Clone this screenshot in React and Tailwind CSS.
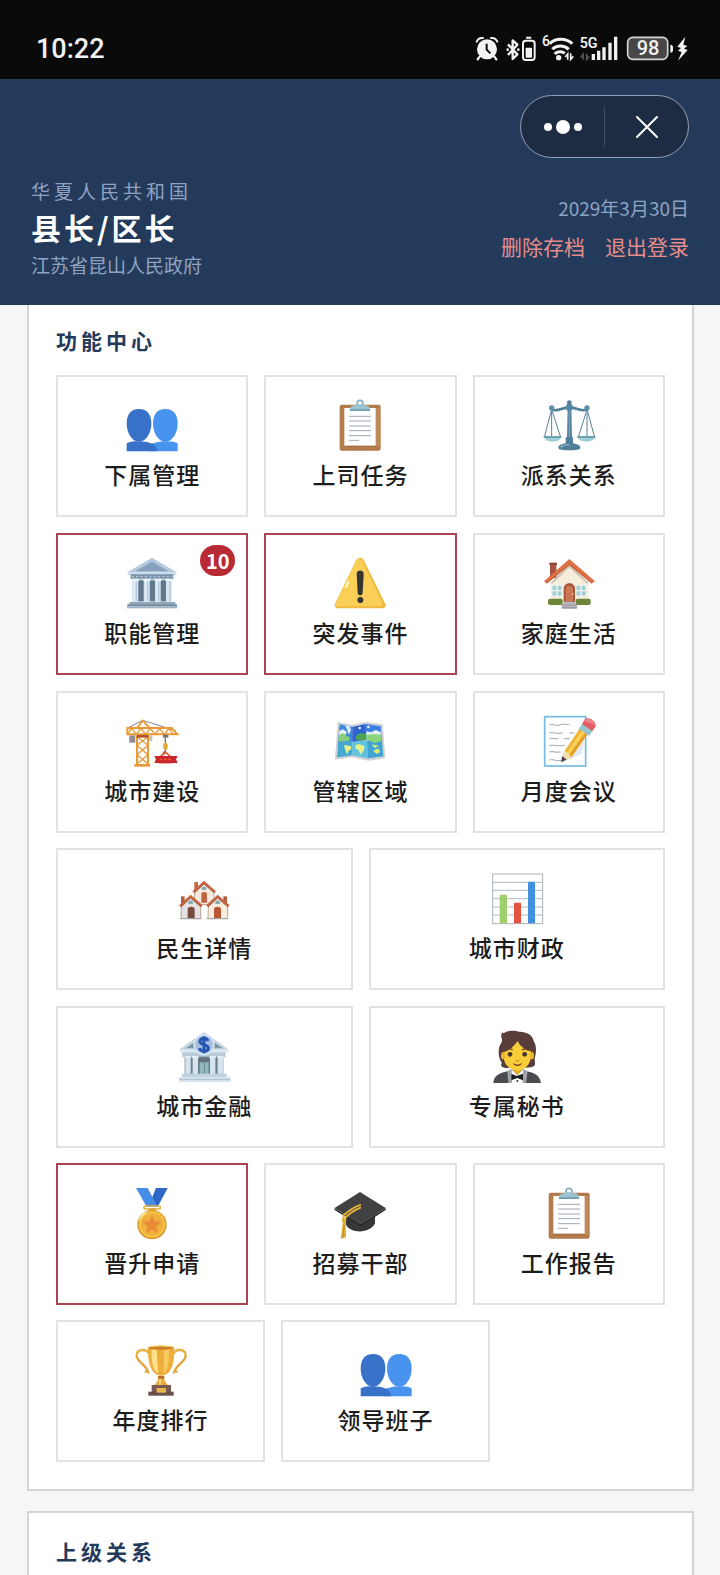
import React from 'react';
import { clsx } from 'clsx';

const Svg = ({ children }) => (
  <svg viewBox="0 0 162 162" className="h-[54px] w-[54px]" aria-hidden="true">
    {children}
  </svg>
);

const PeopleIcon = () => (
  <Svg>
    <path d="M121 33C96 33 84 50 84 77C84 103 99 131 121 131C143 131 158 103 158 77C158 50 146 33 121 33Z" fill="#4893ee" />
    <path d="M72 160V142C88 133 104 130 121 130C140 130 150 132 158 136V160Z" fill="#4893ee" />
    <path d="M42 33C17 33 5 50 5 77C5 103 20 131 42 131C64 131 79 103 79 77C79 50 67 33 42 33Z" fill="#3871c8" />
    <path d="M5 160V136C14 131 28 130 42 130C70 130 96 138 96 160Z" fill="#3871c8" />
  </Svg>
);

const ClipboardIcon = () => (
  <Svg>
    <rect x="20" y="20" width="123" height="138" rx="6" fill="#b27b4b" />
    <path d="M129 30h11v116h-11z" fill="#c08a58" />
    <rect x="34" y="30" width="94" height="114" fill="#fff" />
    <path d="M34 144h94" stroke="#8f5f38" strokeWidth="2" />
    <path d="M48 55h66M48 69h66M48 84h66M48 98h66M48 113h66M48 127h30" stroke="#9fa8b3" strokeWidth="3" />
    <circle cx="81" cy="16" r="9" fill="none" stroke="#82aebf" strokeWidth="5" />
    <path d="M51 39V30C54 23 62 22 70 20C76 18 86 18 92 20C100 22 108 23 111 30V39Z" fill="#9cc3d2" />
    <path d="M51 34h60v5H51z" fill="#6f9db0" />
  </Svg>
);

const ScaleIcon = () => (
  <Svg>
    <g fill="none" stroke="#5a8199" strokeWidth="3">
      <path d="M29 34L7 118M29 34L56 118M29 34V118" />
      <path d="M135 34L109 118M135 34L158 118M135 34V118" />
    </g>
    <path d="M29 34C48 44 58 28 82 28C106 28 116 44 135 34" fill="none" stroke="#4f8098" strokeWidth="8" />
    <path d="M5 115h53c-3 12-13 16-26 16S8 127 5 115z" fill="#9fd0d6" />
    <path d="M106 115h54c-3 12-13 16-27 16s-24-4-27-16z" fill="#9fd0d6" />
    <path d="M5 117h53M106 117h54" stroke="#5b8ea5" strokeWidth="5" />
    <circle cx="29" cy="30" r="8" fill="#5f90a9" />
    <circle cx="135" cy="30" r="8" fill="#5f90a9" />
    <path d="M77 30h11l2 92H75z" fill="#4f7f99" />
    <path d="M82 32v86" stroke="#7fadc2" strokeWidth="3" />
    <circle cx="82" cy="28" r="11" fill="#5587a1" />
    <circle cx="82" cy="14" r="7" fill="#4f7f99" />
    <path d="M71 118h22v18c12 2 22 6 22 13c0 6-15 8-33 8s-33-2-33-8c0-7 10-11 22-13z" fill="#4f7f99" />
    <path d="M56 148c6-6 16-8 26-8" fill="none" stroke="#8ab6c9" strokeWidth="4" />
  </Svg>
);

const TempleIcon = () => (
  <Svg>
    <path d="M81 5L154 48V56H8V48Z" fill="#b5c9dc" />
    <path d="M81 17L131 46H31Z" fill="#87a2bd" />
    <path d="M8 51H154" stroke="#d6e4f0" strokeWidth="5" />
    <rect x="17" y="55" width="128" height="14" fill="#718aa5" />
    <path d="M20 62H143" stroke="#a9bfd4" strokeWidth="5" strokeDasharray="8 5" />
    <rect x="22" y="68" width="118" height="72" fill="#c9d9e8" />
    <path d="M40 73h16v63H40zM74 73h16v63H74zM107 73h16v63h-16z" fill="#61788d" />
    <g fill="#dce9f4">
      <path d="M24 72h15v66H24zM58 72h15v66H58zM91 72h15v66H91zM124 72h15v66h-15z" />
    </g>
    <path d="M20 71h22M55 71h22M88 71h22M121 71h22" stroke="#eef5fb" strokeWidth="6" />
    <path d="M34 76v60M68 76v60M101 76v60M134 76v60" stroke="#b4c7da" strokeWidth="4" />
    <rect x="13" y="138" width="138" height="8" fill="#8fa6b9" />
    <rect x="7" y="145" width="149" height="6" fill="#6f879b" />
    <rect x="6" y="151" width="151" height="6" fill="#9db3c6" />
  </Svg>
);

const WarningIcon = () => (
  <Svg>
    <path d="M70 12C75 3 87 3 92 12L156 142C160 151 156 157 147 157H16C7 157 3 151 7 142Z" fill="#f0b840" />
    <path d="M68 16C73 5 84 5 89 16L147 138C151 147 148 151 141 151H18C9 151 5 148 9 140Z" fill="#f9cf57" />
    <path d="M39 92L46 78" stroke="#fff6c4" strokeWidth="7" strokeLinecap="round" />
    <path d="M71 54c0-14 21-14 21 0l-3 56c-1 11-14 11-15 0z" fill="#36342f" />
    <circle cx="82" cy="132" r="9" fill="#36342f" />
  </Svg>
);

const HouseIcon = () => (
  <Svg>
    <rect x="24" y="21" width="19" height="45" fill="#a85342" />
    <path d="M22 20h23v7H22z" fill="#8c4638" />
    <path d="M82 26L140 80V146H27V80Z" fill="#f7eddc" />
    <path d="M28 82L82 30L138 82" fill="none" stroke="#cfc3ae" strokeWidth="6" />
    <path d="M82 9L159 76L150 82L82 26L14 82L6 76Z" fill="#e07044" />
    <path d="M14 82L82 26L150 82" fill="none" stroke="#b9502f" strokeWidth="3" />
    <g fill="#9fcfd3" stroke="#eef3f1" strokeWidth="3">
      <path d="M30 88h15v16H30zM45 88h15v16H45zM30 104h15v16H30zM45 104h15v16H45z" />
      <path d="M102 88h15v16h-15zM117 88h15v16h-15zM102 104h15v16h-15zM117 104h15v16h-15z" />
    </g>
    <path d="M65 138V98C65 76 99 76 99 98V138Z" fill="#a9533b" />
    <path d="M71 136V99C71 86 93 86 93 99V136Z" fill="#cc7755" />
    <circle cx="92" cy="114" r="3" fill="#e8c36a" />
    <rect x="18" y="128" width="44" height="19" rx="6" fill="#6f8538" />
    <rect x="101" y="128" width="45" height="19" rx="6" fill="#6f8538" />
    <path d="M64 137h37v8H64z" fill="#b6b5ba" />
    <path d="M59 145h46v13H59z" fill="#97969e" />
    <path d="M59 151h46" stroke="#c5c4ca" strokeWidth="3" />
  </Svg>
);

const CraneIcon = () => (
  <Svg>
    <path d="M10 41L53 19L152 50" fill="none" stroke="#84838a" strokeWidth="3" />
    <rect x="13" y="64" width="18" height="22" fill="#8e8e94" />
    <rect x="68" y="64" width="14" height="17" fill="#c9c2b4" />
    <g fill="none" stroke="#e99a35" strokeWidth="6">
      <path d="M36 42L53 20L74 42" />
      <path d="M7 42H140L157 61H7Z" />
      <path d="M7 61L20 43L34 61L48 43L62 61L76 43L90 61L104 43L118 61L132 43L144 61" strokeWidth="4" />
      <path d="M36 66V152M69 66V152" />
      <path d="M36 68L69 94L36 122L69 150M69 68L36 94L69 122L36 150" strokeWidth="4" />
    </g>
    <rect x="35" y="63" width="35" height="8" fill="#b5532a" />
    <rect x="28" y="150" width="47" height="8" fill="#e99a35" />
    <rect x="114" y="62" width="16" height="9" fill="#77767d" />
    <path d="M121 70v22" stroke="#77767d" strokeWidth="4" />
    <rect x="115" y="87" width="13" height="20" rx="5" fill="#e5a63a" />
    <path d="M121 106v6c-9 2-7 10 0 8" fill="none" stroke="#77767d" strokeWidth="4" />
    <path d="M104 130L121 114L139 130V146H104Z" fill="none" stroke="#dd5a32" strokeWidth="5" />
    <path d="M88 126h70l-5 10l5 11H88l5-11z" fill="#c9252b" />
    <path d="M104 136h36" stroke="#f0593c" strokeWidth="5" strokeDasharray="8 5" />
  </Svg>
);

const MapIcon = () => (
  <Svg>
    <path d="M14 24L58 33L98 24L149 31L157 133L106 140L56 130L6 137Z" fill="#cdd0d4" />
    <path d="M20 31L58 39L58 83L14 100Z" fill="#3f86dd" />
    <path d="M58 39L98 30L100 78L58 84Z" fill="#2f63d4" />
    <path d="M98 30L143 37L147 90L100 78Z" fill="#3d7fe2" />
    <path d="M17 84L58 80V124L12 130Z" fill="#45a9cf" />
    <path d="M58 83L102 80L105 133L58 124Z" fill="#5fc3e0" />
    <path d="M102 80L147 84L151 127L105 133Z" fill="#3fa4d2" />
    <path d="M18 58C24 50 32 54 38 64L50 70L48 80L16 83Z" fill="#86cf78" />
    <path d="M19 50L30 46L42 54L38 62L28 58L18 64Z" fill="#e4eff3" />
    <path d="M36 34L50 37L54 49L47 62L42 46Z" fill="#dcecf7" />
    <path d="M66 74L72 62L84 57L99 60V77L80 80Z" fill="#4da451" />
    <path d="M99 60L123 54L143 60L146 82L126 86L100 78Z" fill="#8bd67c" />
    <path d="M99 52L114 55L128 48L143 54L144 62L120 60L101 63Z" fill="#e4eff3" />
    <path d="M33 93L55 97L54 106L45 112L43 123L37 109Z" fill="#e8f08b" />
    <path d="M67 94L76 90L94 95L93 108L84 122L76 108L68 104Z" fill="#e8f08b" />
    <path d="M116 91L137 95L126 103ZM120 111L136 103L142 114L131 120Z" fill="#dceb7e" />
    <circle cx="80" cy="42" r="4" fill="#e4f3fc" />
    <circle cx="106" cy="39" r="4" fill="#e4f3fc" />
  </Svg>
);

const MemoIcon = () => (
  <Svg>
    <rect x="8" y="8" width="123" height="148" fill="#fdfeff" stroke="#77b9e2" strokeWidth="5" />
    <path d="M22 32c12-4 18 6 32 1s18-1 28-1M22 57c12-4 18 4 40 0M82 57h16M22 74c10-4 18 3 28 0M66 74h18M22 95c12-4 24 3 46-1M22 114c10-4 18 3 34 0M22 138c10-4 18 4 36 1M104 114l14-4" fill="none" stroke="#a3a6ab" strokeWidth="3" />
    <path d="M88 131L128 78L120 118L76 140Z" fill="#dfe9f4" />
    <path d="M60 142L66 114L118 36L142 54L88 131Z" fill="#f2b334" />
    <path d="M76 121L129 45" stroke="#ffd75c" strokeWidth="8" />
    <path d="M84 128L138 52" stroke="#d9902b" strokeWidth="4" />
    <path d="M60 142L65 112C72 111 76 116 78 121C84 122 88 127 88 132Z" fill="#f5deb4" />
    <path d="M57 145L61 126L74 137Z" fill="#4b4549" />
    <path d="M111 44L121 29L152 50L141 66Z" fill="#92c5cc" />
    <path d="M120 30L127 19C133 3 167 22 160 38L151 51Z" fill="#e35b63" />
    <path d="M126 21C134 8 158 18 160 33Z" fill="#ef8288" />
  </Svg>
);

const Cottage = ({ x, y, wall }) => (
  <g transform={`translate(${x} ${y})`}>
    <path d="M-28 34L0 6L30 34V73H-29Z" fill={wall} stroke="#9f7b6b" strokeWidth="2" />
    <path d="M-35 33L0 1L36 33L31 38L0 11L-29 38Z" fill="#c8643f" />
    <path d="M-29 38L0 11L31 38" fill="none" stroke="#87402d" strokeWidth="2" />
    <path d="M-7 29V24C-6 17 7 17 7 24V29Z" fill="#85adb7" />
  </g>
);

const HousesIcon = () => (
  <Svg>
    <rect x="52" y="33" width="11" height="27" fill="#c2673f" />
    <Cottage x={81} y={28} wall="#f5eade" />
    <path d="M73 95V68C74 61 89 61 90 68V95Z" fill="#c16342" />
    <rect x="12" y="76" width="11" height="22" fill="#b45e40" />
    <rect x="139" y="76" width="11" height="22" fill="#b45e40" />
    <Cottage x={41} y={70} wall="#e5e0e2" />
    <Cottage x={122} y={70} wall="#f9ecdf" />
    <path d="M32 142V113C33 105 52 105 53 113V142Z" fill="#774b3d" />
    <path d="M111 142V113C112 105 131 105 132 113V142Z" fill="#b95735" />
    <path d="M8 143h67M87 143h67" stroke="#9da5a5" strokeWidth="2" />
  </Svg>
);

const ChartIcon = () => (
  <Svg>
    <rect x="8" y="9" width="150" height="149" fill="#fff" stroke="#a9b0b5" strokeWidth="3" />
    <path d="M8 34H158M8 58H158M8 83H158M8 108H158M8 132H158" stroke="#b4bbc1" strokeWidth="3" />
    <path d="M29 157V74q0-3 3-3h16q3 0 3 3v83z" fill="#a1cf70" />
    <path d="M72 157V98q0-3 3-3h15q3 0 3 3v59z" fill="#e3513f" />
    <path d="M114 157V35q0-3 3-3h15q3 0 3 3v122z" fill="#4190e0" />
  </Svg>
);

const BankIcon = () => (
  <Svg>
    <path d="M81 9L153 60V70H9V60Z" fill="#c3d6e3" />
    <path d="M75 24L26 58H75ZM87 24L138 58H87Z" fill="#8197a8" />
    <path d="M10 65H152" stroke="#dfebf3" strokeWidth="7" />
    <rect x="16" y="70" width="130" height="15" fill="#b7cbd9" />
    <rect x="23" y="83" width="116" height="54" fill="#71818d" />
    <g fill="#d5e4ee">
      <path d="M25 82h16v55H25zM47 82h16v55H47zM99 82h16v55H99zM122 82h16v55h-16z" />
    </g>
    <path d="M23 84h20M45 84h20M97 84h20M120 84h20" stroke="#eef5f9" strokeWidth="5" />
    <rect x="65" y="88" width="33" height="49" fill="#62717c" />
    <path d="M68 100h13v37H68zM83 100h12v37H83z" fill="#8fb9bf" />
    <rect x="15" y="134" width="134" height="10" fill="#bfd2df" />
    <rect x="6" y="144" width="154" height="15" fill="#d5e4ec" />
    <path d="M6 151h154" stroke="#a9c0cf" strokeWidth="3" />
    <circle cx="81" cy="47" r="32" fill="#d7e5f0" />
    <circle cx="81" cy="47" r="27" fill="#a8bfe0" />
    <path d="M93 36C90 26 69 26 69 38C69 49 94 45 94 57C94 70 71 69 67 58M81 22V73" fill="none" stroke="#2555b2" strokeWidth="9" />
  </Svg>
);

const SecretaryIcon = () => (
  <Svg>
    <path d="M34 18C35 10 38 9 41 13C52 3 76 5 86 8C109 7 128 18 131 36C139 48 140 67 135 84C132 96 139 107 131 112C121 117 108 116 100 116H58C47 118 36 117 33 108C36 103 36 101 31 94C24 79 24 54 34 41C40 31 32 29 34 18Z" fill="#583d3a" />
    <rect x="67" y="104" width="30" height="35" fill="#e1ad29" />
    <path d="M10 162C12 137 32 130 61 126L82 144L103 126C132 130 150 138 153 162Z" fill="#4b4b50" />
    <path d="M52 126L65 119L82 139L99 119L113 127L108 162H55Z" fill="#a0a3aa" />
    <path d="M65 122L82 139L99 122L98 162H66Z" fill="#fff" />
    <path d="M41 70C55 66 70 54 83 36C91 54 107 62 123 67V82C122 105 105 124 82 125C59 124 41 104 41 84Z" fill="#f8ce38" />
    <ellipse cx="39" cy="80" rx="6" ry="11" fill="#e8b52f" />
    <ellipse cx="126" cy="80" rx="6" ry="11" fill="#e8b52f" />
    <circle cx="60" cy="76" r="7" fill="#433632" />
    <circle cx="104" cy="76" r="7" fill="#433632" />
    <path d="M50 64c6-5 13-5 18-1M96 63c6-4 13-4 18 1" fill="none" stroke="#674833" strokeWidth="4" />
    <path d="M77 94c3 3 7 3 10 0" fill="none" stroke="#cf8e24" strokeWidth="4" />
    <path d="M69 101c7 7 20 7 27 0c-3 13-24 13-27 0z" fill="#7b352a" />
    <path d="M64 134L80 141L99 134V154L82 147L64 154Z" fill="#1e1e20" />
    <circle cx="82" cy="156" r="3" fill="#34353b" />
  </Svg>
);

const MedalIcon = () => (
  <Svg>
    <path d="M93 6H128L98 62H70Z" fill="#2c68c4" />
    <path d="M33 6H68L97 62H65Z" fill="#468de8" />
    <rect x="57" y="60" width="49" height="9" rx="4" fill="none" stroke="#e4b044" strokeWidth="5" />
    <path d="M71 67h21v13H71z" fill="#e2a334" />
    <circle cx="81" cy="116" r="44" fill="#dc9733" />
    <circle cx="81" cy="115" r="40" fill="#f6c546" />
    <circle cx="81" cy="115" r="34" fill="#efb13c" />
    <path d="M81 88L89 106L109 108L94 121L98 141L81 131L64 141L68 121L53 108L73 106Z" fill="#e78b37" />
    <path d="M44 102c4-11 11-19 21-23" fill="none" stroke="#ffe999" strokeWidth="5" />
  </Svg>
);

const CapIcon = () => (
  <Svg>
    <path d="M39 88V116C53 144 112 143 126 112V84Z" fill="#37373a" />
    <path d="M81 18L158 66L83 114L5 66Z" fill="#414144" />
    <path d="M5 66L83 112L158 66V72L83 120L5 72Z" fill="#252528" />
    <path d="M5 67L83 113L158 67" fill="none" stroke="#777" strokeWidth="2" />
    <path d="M84 56C67 62 45 76 32 88L31 106M84 64C65 72 47 84 37 95" fill="none" stroke="#e4b53a" strokeWidth="6" />
    <path d="M27 101C26 94 40 94 40 102L38 113L39 154L23 159L29 113Z" fill="#dfac35" />
    <path d="M33 115L31 155" stroke="#b88420" strokeWidth="2" />
  </Svg>
);

const TrophyIcon = () => (
  <Svg>
    <path d="M46 33C35 14 7 19 8 39C9 57 39 67 42 88M117 33C128 14 156 19 155 39C154 57 124 67 121 88" fill="none" stroke="#e3a23a" strokeWidth="7" />
    <path d="M45 31C34 17 10 21 10 38M118 31C129 17 153 21 153 38" fill="none" stroke="#f8ca5c" strokeWidth="3" />
    <path d="M32 88c6-5 10-3 13 4M131 88c-6-5-10-3-13 4" fill="none" stroke="#dda139" strokeWidth="5" />
    <path d="M42 14H121C122 60 113 96 81 98C51 96 41 60 42 14Z" fill="#efae3c" />
    <path d="M53 20H68L72 91C58 84 51 56 53 20Z" fill="#ffe28a" />
    <path d="M91 20H105C106 57 101 80 89 92Z" fill="#f8cb61" />
    <ellipse cx="81" cy="14" rx="39" ry="6" fill="#c97f27" />
    <path d="M42 14C48 7 113 7 120 14" fill="none" stroke="#f8d36b" strokeWidth="4" />
    <path d="M74 98H89L91 110C94 118 99 122 103 128H60C64 122 69 118 72 110Z" fill="#e8a83a" />
    <path d="M72 99h19v8H72z" fill="#b66f27" />
    <path d="M78 108v17" stroke="#ffe28a" strokeWidth="5" />
    <rect x="53" y="126" width="58" height="22" fill="#795950" />
    <rect x="43" y="146" width="76" height="12" fill="#6a4e49" />
    <rect x="68" y="135" width="28" height="14" fill="#e5b84e" />
  </Svg>
);

const StatusIcons = () => (
  <svg
    viewBox="0 0 639 90"
    className="h-[30px] w-[213px]"
    fill="#f2f2f2"
    fontFamily="Roboto, sans-serif"
    role="img"
    aria-label="98%"
  >
    {/* alarm */}
    <circle cx="36" cy="46" r="30" />
    <path d="M5 23C9 14 16 11 24 12M48 12C56 11 63 14 67 23" fill="none" stroke="#f2f2f2" strokeWidth="6" strokeLinecap="round" />
    <path d="M14 68L8 76M58 68L64 76" stroke="#f2f2f2" strokeWidth="7" strokeLinecap="round" />
    <path d="M35 29V47L46 58" fill="none" stroke="#0a0a0a" strokeWidth="6" />
    {/* bluetooth */}
    <path d="M99 31L127 61L113 75V19L127 32L99 63" fill="none" stroke="#f2f2f2" strokeWidth="7" strokeLinejoin="round" />
    <circle cx="98" cy="47" r="4" />
    <circle cx="130" cy="47" r="4" />
    <rect x="144" y="20" width="35" height="58" rx="8" fill="none" stroke="#f2f2f2" strokeWidth="6" />
    <rect x="153" y="8" width="16" height="6" rx="2" />
    <rect x="152" y="41" width="19" height="30" rx="2" />
    {/* wifi */}
    <text x="201" y="37" fontSize="42" fontWeight="500">6</text>
    <g fill="none" stroke="#f2f2f2" strokeWidth="9">
      <path d="M224 29C241 11 273 11 292 29" />
      <path d="M232 46C244 33 268 33 281 46" />
      <path d="M239 60C247 51 262 51 269 58" />
    </g>
    <circle cx="251" cy="71" r="8" />
    <path d="M278 77V60L271 69M287 58V76L295 67" fill="none" stroke="#f2f2f2" strokeWidth="5" />
    {/* signal */}
    <text x="314" y="43" fontSize="43" fontWeight="600">5G</text>
    <path d="M324 77V61L317 70M335 59V76L343 67" fill="none" stroke="#555" strokeWidth="5" />
    <path d="M350 60h10v18h-10zM366 50h10v28h-10zM382 40h10v38h-10zM400 26h10v52h-10zM417 8h10v70h-10z" />
    {/* battery */}
    <rect x="458" y="10" width="120" height="66" rx="15" fill="#474747" stroke="#d5d5d5" strokeWidth="5" />
    <text x="519" y="64" fontSize="60" fontWeight="500" textAnchor="middle">98</text>
    <path d="M586 32q8 0 8 8v8q0 8-8 8z" />
    <path d="M631 8L607 38L618 42L609 50L620 54L609 80L638 48L627 44L637 36L625 32Z" />
  </svg>
);

const groups = [
  {
    grid: 'grid grid-cols-3 gap-4',
    items: [
      { label: '下属管理', icon: PeopleIcon },
      { label: '上司任务', icon: ClipboardIcon },
      { label: '派系关系', icon: ScaleIcon },
      { label: '职能管理', icon: TempleIcon, alert: true, badge: 10 },
      { label: '突发事件', icon: WarningIcon, alert: true },
      { label: '家庭生活', icon: HouseIcon },
      { label: '城市建设', icon: CraneIcon },
      { label: '管辖区域', icon: MapIcon },
      { label: '月度会议', icon: MemoIcon },
    ],
  },
  {
    grid: 'grid grid-cols-2 gap-4',
    items: [
      { label: '民生详情', icon: HousesIcon },
      { label: '城市财政', icon: ChartIcon },
      { label: '城市金融', icon: BankIcon },
      { label: '专属秘书', icon: SecretaryIcon },
    ],
  },
  {
    grid: 'grid grid-cols-3 gap-4',
    items: [
      { label: '晋升申请', icon: MedalIcon, alert: true },
      { label: '招募干部', icon: CapIcon },
      { label: '工作报告', icon: ClipboardIcon },
    ],
  },
  {
    grid: 'grid grid-cols-[209px_209px] gap-4',
    items: [
      { label: '年度排行', icon: TrophyIcon },
      { label: '领导班子', icon: PeopleIcon },
    ],
  },
];

const Tile = ({ label, icon: Icon, alert, badge }) => (
  <button
    type="button"
    className={clsx(
      'relative flex flex-col items-center gap-[6px] border-2 bg-white pt-[21px] pb-[25px]',
      alert ? 'border-[#ae4453]' : 'border-[#e2e2e2]'
    )}
  >
    <Icon />
    <span className="text-[23px] leading-[32px] font-medium tracking-[1px] text-[#1c1c1c]">{label}</span>
    {badge && (
      <span className="absolute top-[10px] right-[11px] flex h-[31px] min-w-[35px] items-center justify-center rounded-full bg-[#b82a34] px-1 text-[20px] leading-none font-bold text-white">
        {badge}
      </span>
    )}
  </button>
);

const SectionTitle = ({ children }) => (
  <h2 className="text-[21px] leading-[28px] font-bold tracking-[4px] text-[#243a5b]">{children}</h2>
);

const App = () => {
  return (
    <div className="flex min-h-screen flex-col bg-[#f6f6f5] font-['Noto_Sans_CJK_SC',sans-serif]">
      {/* Status bar */}
      <div className="flex h-[79px] items-center justify-between bg-[#0a0a0a] pt-[18px] pr-8 pl-9">
        <span className="font-[Roboto,sans-serif] text-[27px] leading-[30px] font-medium text-[#f2f2f2]">10:22</span>
        <StatusIcons />
      </div>

      {/* Header */}
      <header className="bg-[#243a5b] pt-4 pr-[31px] pb-[26px] pl-[31px]">
        <div className="flex justify-end">
          <div className="flex h-[63px] w-[169px] items-center rounded-full border border-[#94a0b3] bg-[#1d2b43]">
            <button type="button" aria-label="更多" className="flex flex-1 items-center justify-center gap-1">
              <span className="h-2 w-2 rounded-full bg-white" />
              <span className="h-[14px] w-[14px] rounded-full bg-white" />
              <span className="h-2 w-2 rounded-full bg-white" />
            </button>
            <span className="h-10 w-px bg-[#3f4d66]" />
            <button type="button" aria-label="关闭" className="flex flex-1 items-center justify-center">
              <svg viewBox="0 0 22 22" className="h-[22px] w-[22px]" stroke="#fff" strokeWidth="2" strokeLinecap="round">
                <path d="M1 1L21 21M21 1L1 21" />
              </svg>
            </button>
          </div>
        </div>

        <div className="mt-[21px] flex items-center justify-between">
          <div>
            <p className="text-[19px] leading-[24px] tracking-[4px] text-[#8fa2c2]">华夏人民共和国</p>
            <h1 className="text-[30px] leading-[48px] font-bold tracking-[3px] text-white">县长/区长</h1>
            <p className="text-[19px] leading-[28px] text-[#8fa2c2]">江苏省昆山人民政府</p>
          </div>
          <div className="flex flex-col items-end gap-[10px] pb-1">
            <p className="text-[19px] leading-[28px] text-[#8fa2c2]">2029年3月30日</p>
            <div className="flex gap-5 text-[21px] leading-[28px] text-[#e58d8b]">
              <button type="button">删除存档</button>
              <button type="button">退出登录</button>
            </div>
          </div>
        </div>
      </header>

      {/* Function center */}
      <section className="mr-[26px] ml-[27px] border-2 border-t-0 border-[#d4d4d4] bg-white px-[27px] pt-[21px] pb-[27px]">
        <SectionTitle>功能中心</SectionTitle>
        <div className="mt-[21px] flex flex-col gap-[15px]">
          {groups.map((group, i) => (
            <div key={i} className={group.grid}>
              {group.items.map((item) => (
                <Tile key={item.label} {...item} />
              ))}
            </div>
          ))}
        </div>
      </section>

      {/* Superior relations */}
      <section className="mt-5 mr-[26px] ml-[27px] flex-1 border-2 border-b-0 border-[#d4d4d4] bg-white px-[27px] pt-6 pb-2">
        <SectionTitle>上级关系</SectionTitle>
      </section>
    </div>
  );
};

export default App;
